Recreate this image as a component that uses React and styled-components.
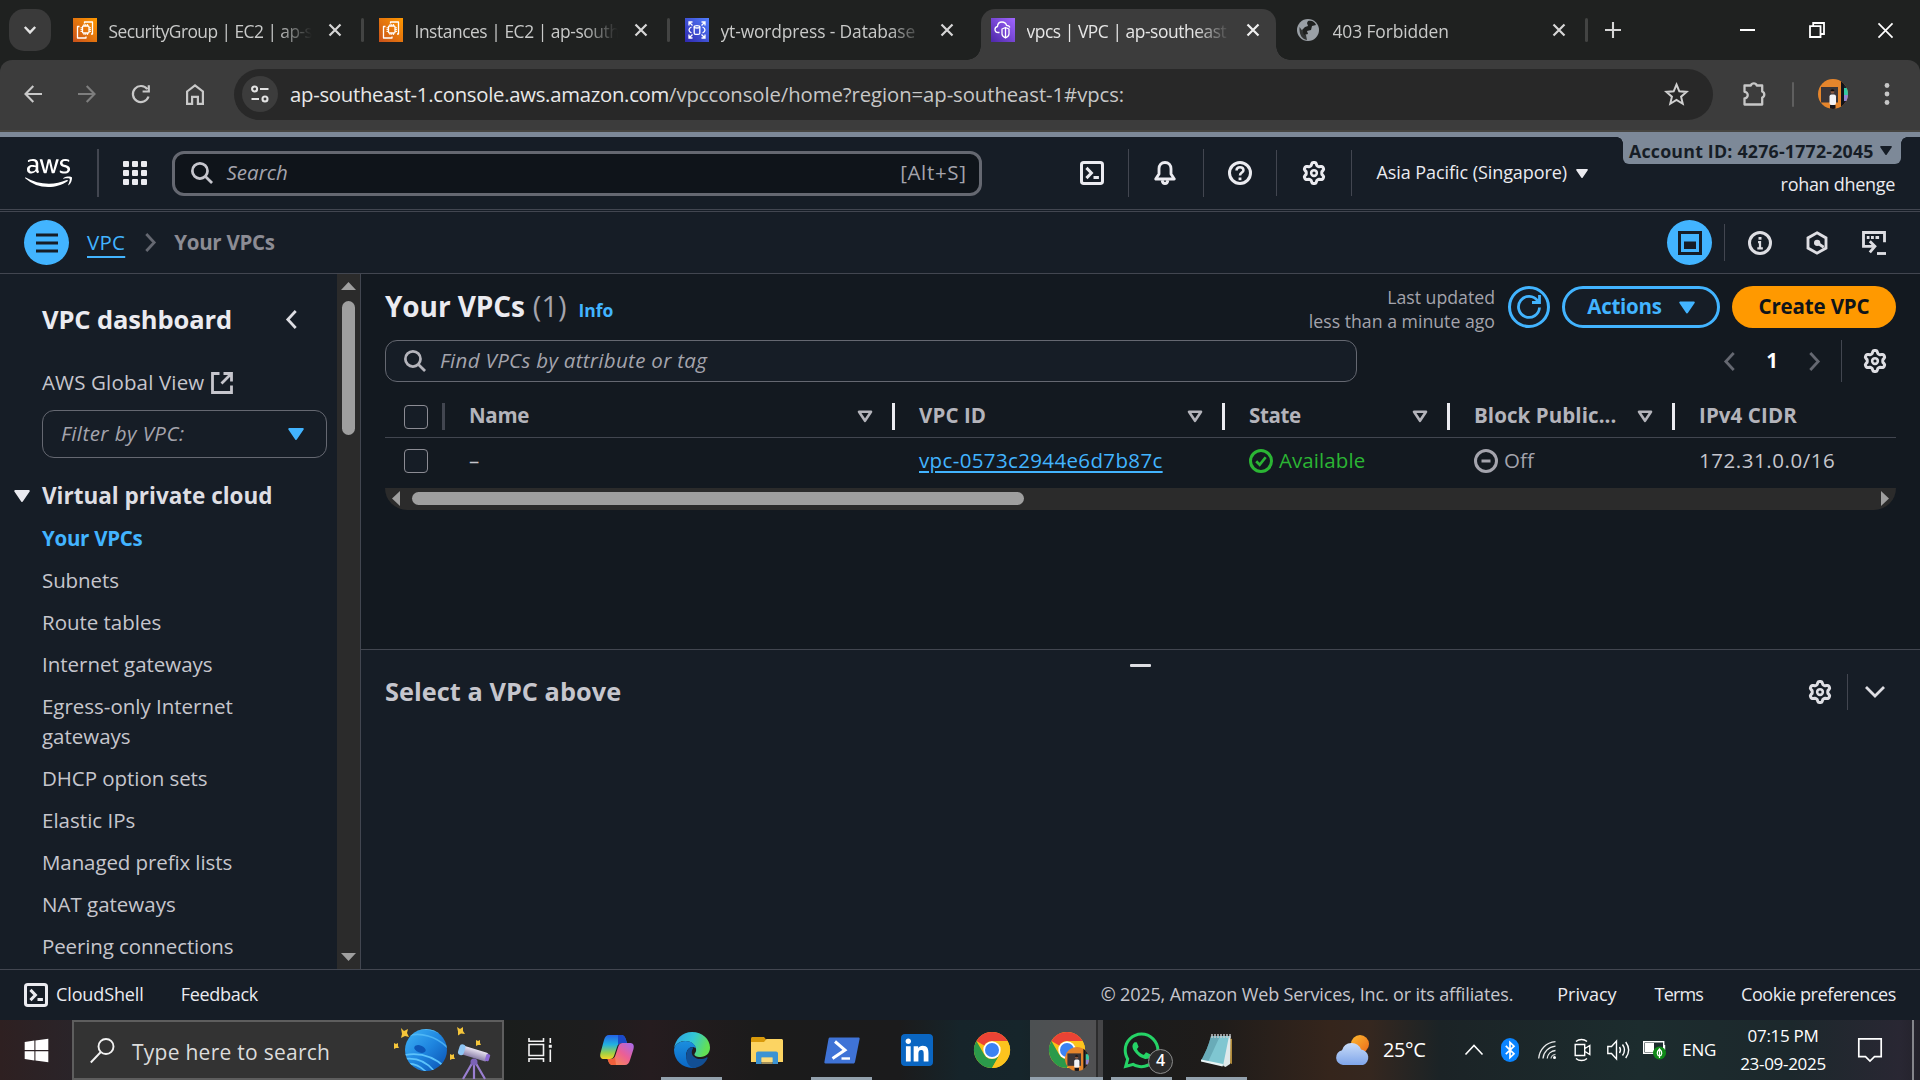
import React from "react";
import styled, { createGlobalStyle, css } from "styled-components";
import { FaAws, FaWindows, FaLinkedin, FaWhatsapp } from "react-icons/fa";

const Global = createGlobalStyle`
  *, *::before, *::after { box-sizing: border-box; }
  body { margin: 0; background: #161d26; overflow: hidden; }
  body, button, input { font-family: "Open Sans", "Noto Sans", sans-serif; }
`;

const Screen = styled.div`
  width: 1920px;
  height: 1080px;
  display: flex;
  flex-direction: column;
  overflow: hidden;
`;

const Label = styled.span`
  display: block;
  flex: none;
  white-space: pre;
  margin: ${(p) => (!p.$size || p.$size === 18 ? "-1px 0 1px" : "0")};
  font-size: ${(p) => p.$size || 20.5}px;
  font-weight: ${(p) => p.$weight || (p.$size ? 400 : 450)};
  font-style: ${(p) => (p.$italic ? "italic" : "normal")};
  letter-spacing: ${(p) => p.$track || 0}px;
  line-height: ${(p) => p.$line || 30}px;
  color: ${(p) => p.$color || "#c6c6cd"};
`;

const Cell = styled.div`
  display: flex;
  flex: none;
  align-items: center;
  justify-content: center;
  width: ${(p) => p.$w}px;
  height: ${(p) => (p.$h ? `${p.$h}px` : "100%")};
`;

const Gap = styled.div`
  flex: ${(p) => (p.$w ? "none" : "1")};
  width: ${(p) => p.$w || 0}px;
`;

const Rule = styled.div`
  flex: none;
  width: ${(p) => p.$w || 1}px;
  height: ${(p) => p.$h}px;
  background: ${(p) => p.$color || "#424650"};
  border-radius: ${(p) => p.$r || 0}px;
`;

const Glyph = styled.svg`
  display: block;
  flex: none;
  overflow: visible;
  width: ${(p) => p.$w || 24}px;
  height: ${(p) => p.$h || p.$w || 24}px;
  fill: ${(p) => p.$fill || "none"};
  stroke: ${(p) => p.$color || "#ebebf0"};
  stroke-width: ${(p) => p.$sw || 2};
`;

/* ---------- console icons ---------- */

const gearPath = (() => {
  const pts = [];
  for (let i = 0; i < 72; i++) {
    const a = (i / 72) * Math.PI * 2;
    const r = 6.1 + 0.95 * Math.tanh(2 * Math.cos(6 * a));
    pts.push(`${(8 + r * Math.sin(a)).toFixed(2)} ${(8 - r * Math.cos(a)).toFixed(2)}`);
  }
  return `M${pts.join("L")}Z`;
})();

const Gear = ({ color }) => (
  <Glyph viewBox="0 0 16 16" $color={color} $sw={2} strokeLinejoin="round">
    <path d={gearPath} />
    <circle cx="8" cy="8" r="1.9" strokeWidth="1.7" />
  </Glyph>
);
const Terminal = () => (
  <Glyph viewBox="0 0 16 16">
    <rect x="1" y="1" width="14" height="14" rx="1.5" />
    <path d="M4.3 4.6 7.6 8l-3.3 3.4" />
    <path d="M9 11h3.6" />
  </Glyph>
);
const Bell = () => (
  <Glyph viewBox="0 0 16 16" $sw={1.9} strokeLinejoin="round">
    <path d="M8 1C5.6 1 4 2.8 4 5.2V8.6L1.8 12H14.2L12 8.6V5.2C12 2.8 10.4 1 8 1Z" />
    <path d="M6.1 12.8C6.3 14.3 7 15 8 15s1.7-.7 1.9-2.2" />
  </Glyph>
);
const Help = () => (
  <Glyph viewBox="0 0 16 16">
    <circle cx="8" cy="8" r="7" />
    <path d="M5.7 6.3C5.7 4.9 6.7 4.1 8 4.1s2.3.8 2.3 2.05C10.3 7.7 8 7.7 8 9.6" strokeWidth="1.7" />
    <path d="M8 11v1.8" strokeWidth="1.9" />
  </Glyph>
);
const Info = () => (
  <Glyph viewBox="0 0 16 16" $color="#dedee3">
    <circle cx="8" cy="8" r="7" />
    <path d="M6.7 7.4H8v3.8M6.2 11.5h3.7" strokeWidth="1.5" />
    <path d="M8 4v1.8" />
  </Glyph>
);
const Hexagon = () => (
  <Glyph viewBox="0 0 16 16" $sw={1.9} $color="#dedee3">
    <path d="M8 1.2 14 4.6v6.8L8 14.8 2 11.4V4.6Z" />
    <path d="m8.5 8.2 4 2.6" />
    <circle cx="8.1" cy="7.9" r="2.1" fill="#dedee3" stroke="none" />
  </Glyph>
);
const Tutorial = () => (
  <Glyph viewBox="0 0 16 16" $sw={1.9} $color="#dedee3">
    <path d="M15 7.5V1H1v9.2h7" />
    <path d="M5.2 6.8 8.6 10.2 5.2 14.2" />
    <path d="M3.2 4.3H5M6 4.3h1.9M9 4.3h2.4" />
    <path d="M10 15h6" />
  </Glyph>
);
const SearchIcon = ({ w = 22, color = "#b4b4bb" }) => (
  <Glyph viewBox="0 0 16 16" $w={w} $color={color}>
    <circle cx="6.5" cy="6.5" r="5.5" />
    <path d="m10.5 10.5 4.8 4.8" />
  </Glyph>
);
const Down = ({ w = 16, h = 12, color = "#ebebf0" }) => (
  <Glyph viewBox="0 0 16 12" $w={w} $h={h} $color={color} $fill={color} strokeLinejoin="round">
    <path d="M1.2 1h13.6L8 11Z" />
  </Glyph>
);
const Filter = () => (
  <Glyph viewBox="0 0 16 13" $w={16} $h={13} $color="#b4b4bb" $sw={2.6} strokeLinejoin="round">
    <path d="M2 1.8h12L8 10.8Z" />
  </Glyph>
);
const Chevron = ({ w = 11, h = 19, color = "#dedee3", dir = "left", sw = 2.6 }) => (
  <Glyph viewBox="0 0 10 18" $w={w} $h={h} $color={color} $sw={sw}>
    <path d={dir === "left" ? "M9 1 1.5 9 9 17" : "M1 1 8.5 9 1 17"} />
  </Glyph>
);
const External = () => (
  <Glyph viewBox="0 0 22 22" $w={22} $color="#c6c6cd" $sw={2.8}>
    <path d="M8.5 1.5h-7v19h19v-7" />
    <path d="M12.5 1.5h8v8M20 2 10.5 11.5" />
  </Glyph>
);

/* ---------- browser ---------- */

const TabStrip = styled.div`
  height: 60px;
  flex: none;
  display: flex;
  align-items: stretch;
  background: #1f2120;
`;
const TabMenu = styled.div`
  width: 42px;
  height: 42px;
  margin: 9px 5.5px 0 9px;
  border-radius: 15px;
  background: #3a3a3a;
  display: flex;
  align-items: center;
  justify-content: center;
`;
const Tab = styled.div`
  position: relative;
  width: 306px;
  flex: none;
  display: flex;
  padding: 0 5px 0 6px;
  ${(p) =>
    p.$line &&
    css`
      &::after {
        content: "";
        position: absolute;
        right: -1px;
        top: 18px;
        width: 3px;
        height: 24px;
        border-radius: 2px;
        background: #434443;
      }
    `}
`;
const TabBody = styled.div`
  flex: 1;
  display: flex;
  align-items: center;
  justify-content: space-between;
  margin-top: 9px;
  padding: 0 17px 9px 10px;
  ${(p) =>
    p.$active &&
    css`
      position: relative;
      background: #3c3c3c;
      border-radius: 14px 14px 0 0;
      &::before,
      &::after {
        content: "";
        position: absolute;
        bottom: 0;
        width: 14px;
        height: 14px;
      }
      &::before {
        left: -14px;
        background: radial-gradient(circle at 0 0, transparent 13.5px, #3c3c3c 14px);
      }
      &::after {
        right: -14px;
        background: radial-gradient(circle at 100% 0, transparent 13.5px, #3c3c3c 14px);
      }
    `}
`;
const TabLead = styled.div`
  display: flex;
  align-items: center;
  gap: 12px;
`;
const TabTitle = styled.div`
  width: 205px;
  white-space: pre;
  font-size: 17.4px;
  letter-spacing: ${(p) => p.$track}px;
  line-height: 26px;
  padding-top: 2px;
  color: ${(p) => (p.$active ? "#e6e6e6" : "#c9cac9")};
  mask-image: linear-gradient(90deg, #000 168px, transparent 203px);
`;
const Toolbar = styled.div`
  height: 72px;
  flex: none;
  background: #1f2120;
`;
const ToolbarInner = styled.div`
  height: 72px;
  display: flex;
  align-items: center;
  padding: 0 0 2px 6px;
  background: #3c3c3c;
  border-radius: 12px 12px 0 0;
  border-bottom: 2px solid #464541;
`;
const Omnibox = styled.div`
  width: 1479px;
  height: 51px;
  display: flex;
  align-items: center;
  margin-left: 12px;
  border-radius: 26px;
  background: #282828;
  padding: 0 24px 0 8px;
`;
const SiteChip = styled.div`
  width: 36px;
  height: 36px;
  border-radius: 50%;
  background: #3c3c3c;
  display: flex;
  align-items: center;
  justify-content: center;
  margin-right: 12px;
`;
const Avatar = styled.div`
  width: ${(p) => p.$d}px;
  height: ${(p) => p.$d}px;
  border-radius: 50%;
  overflow: hidden;
`;

const CloseX = ({ c = "#d6d6d6" }) => (
  <Glyph viewBox="0 0 12 12" $w={12} $color={c} $sw={2.2}>
    <path d="m.5.5 11 11M11.5.5.5 11.5" />
  </Glyph>
);

const Ec2Fav = () => (
  <Glyph viewBox="0 0 24 24" $color="#fff" $sw={1.3} strokeLinejoin="round">
    <defs>
      <linearGradient id="ec2" x1="0" y1="1" x2="1" y2="0">
        <stop offset="0" stopColor="#c8511b" />
        <stop offset="1" stopColor="#f90" />
      </linearGradient>
    </defs>
    <rect width="24" height="24" fill="url(#ec2)" stroke="none" />
    <rect x="9.5" y="8" width="6.5" height="7" rx="1" />
    <path d="M11 6v2M12.8 6v2M14.6 6v2M11 15v2M12.8 15v2M14.6 15v2M7.5 9.8h2M7.5 11.6h2M7.5 13.4h2M16 9.8h2M16 11.6h2M16 13.4h2" strokeWidth="1" />
    <path d="M6.5 8.5h-2v11.5h8.5v-1.5M11.5 5.5V4h8v12h-1.5" />
  </Glyph>
);
const RdsFav = () => (
  <Glyph viewBox="0 0 24 24" $color="#fff" $sw={1.3}>
    <defs>
      <linearGradient id="rds" x1="0" y1="1" x2="1" y2="0">
        <stop offset="0" stopColor="#2e27ad" />
        <stop offset="1" stopColor="#527fff" />
      </linearGradient>
    </defs>
    <rect width="24" height="24" fill="url(#rds)" stroke="none" />
    <path d="M4 7.5V4h3.5M4 4l3.5 3.5M16.5 4H20v3.5M20 4l-3.5 3.5M4 16.5V20h3.5M4 20l3.5-3.5M20 16.5V20h-3.5M20 20l-3.5-3.5" />
    <ellipse cx="12" cy="8.8" rx="2.8" ry="1.2" />
    <path d="M9.2 8.8v6.4c0 1.6 5.6 1.6 5.6 0V8.8M6.5 9C4.6 9.8 4 10.8 4 12s.6 2.2 2.5 3M17.5 9c1.9.8 2.5 1.8 2.5 3s-.6 2.2-2.5 3" />
  </Glyph>
);
const VpcFav = () => (
  <Glyph viewBox="0 0 24 24" $color="#fff" $sw={1.3} strokeLinejoin="round">
    <defs>
      <linearGradient id="vpc" x1="0" y1="1" x2="1" y2="0">
        <stop offset="0" stopColor="#4d27a8" />
        <stop offset="1" stopColor="#a166ff" />
      </linearGradient>
    </defs>
    <rect width="24" height="24" fill="url(#vpc)" stroke="none" />
    <path d="M8.5 14.5H7.2C5.3 14.5 4 13.2 4 11.5c0-1.6 1-2.7 2.5-3C6.6 5.5 8.6 4 11 4c2.3 0 3.9 1.3 4.5 3.3 1.9.1 3 .9 3.3 2.2" />
    <path d="m14.5 9.5 3.5 1.5v5c0 2-1.5 3-3.5 4-2-1-3.5-2-3.5-4v-5ZM14.5 9.5V20" />
  </Glyph>
);
const GlobeFav = () => (
  <Glyph viewBox="0 0 24 24" $color="none">
    <circle cx="11" cy="12" r="11" fill="#9aa0a6" />
    <path d="M11 3c4-1 7 1 8 4l-4 1-1 4-4 1 1 3-4 1-2-5 3-3 3-1-1-3Z" fill="#1f2120" />
    <path d="M2.5 9 7 15l2 2 1 5C5 21 2 17 2.5 9Z" fill="#1f2120" opacity=".85" />
  </Glyph>
);
const Portrait = ({ d }) => (
  <Avatar $d={d}>
    <Glyph viewBox="0 0 30 30" $w={d} $color="none">
      <rect width="30" height="30" fill="#e5852c" />
      <rect x="23" width="3" height="30" fill="#10131a" />
      <rect x="26" width="4" height="10" fill="#1a2530" />
      <rect x="26" y="9" width="4" height="7" fill="#35c9a5" />
      <rect x="26" y="16" width="4" height="6" fill="#8f86d6" />
      <rect x="26" y="22" width="4" height="8" fill="#1a1c2a" />
      <rect x="3" y="8" width="17" height="15.500" fill="#3a3538" />
      <rect x="11.500" y="15.500" width="6.500" height="10.500" rx="2" fill="#f3f3f6" />
      <circle cx="14.500" cy="12.700" r="1.900" fill="#8a5b45" />
      <path d="M12.500 12.300a2 2 0 0 1 4 0Z" fill="#120c0a" />
      <rect x="12" y="26" width="5.500" height="4" fill="#15151c" />
    </Glyph>
  </Avatar>
);

const TABS = [
  { icon: <Ec2Fav />, title: "SecurityGroup | EC2 | ap-s", line: true, track: -0.55 },
  { icon: <Ec2Fav />, title: "Instances | EC2 | ap-south", line: true, track: -0.45 },
  { icon: <RdsFav />, title: "yt-wordpress - Database", track: -0.12 },
  { icon: <VpcFav />, title: "vpcs | VPC | ap-southeast", active: true, track: -0.45 },
  { icon: <GlobeFav />, title: "403 Forbidden", line: true, track: -0.1 },
];

const Browser = () => (
  <>
    <TabStrip>
      <TabMenu>
        <Glyph viewBox="0 0 12 8" $w={12} $h={8} $sw={2.4} $color="#e3e3e3">
          <path d="m.8 1 5.2 5.4L11.2 1" />
        </Glyph>
      </TabMenu>
      {TABS.map((t, i) => (
        <Tab key={i} $line={t.line}>
          <TabBody $active={t.active}>
            <TabLead>
              {t.icon}
              <TabTitle $active={t.active} $track={t.track}>{t.title}</TabTitle>
            </TabLead>
            <CloseX c={t.active ? "#f0f0f0" : undefined} />
          </TabBody>
        </Tab>
      ))}
      <Cell $w={52}>
        <Glyph viewBox="0 0 16 16" $w={16} $sw={2.1} $color="#d6d6d6">
          <path d="M8 0v16M0 8h16" />
        </Glyph>
      </Cell>
      <Gap />
      <Cell $w={69}>
        <Rule $w={15} $h={2} $color="#fff" />
      </Cell>
      <Cell $w={69}>
        <Glyph viewBox="0 0 16 16" $w={16} $sw={1.8} $color="#fff">
          <path d="M1 4.2h10.500V15H1ZM4.2 4V1H15v11h-3.4" />
        </Glyph>
      </Cell>
      <Cell $w={69}>
        <Glyph viewBox="0 0 16 16" $w={15} $sw={1.8} $color="#fff">
          <path d="m.5.5 15 15M15.5.5l-15 15" />
        </Glyph>
      </Cell>
    </TabStrip>
    <Toolbar>
      <ToolbarInner>
        <Cell $w={54}>
          <Glyph viewBox="0 0 18 18" $w={18} $sw={2.1} $color="#c9c9c9">
            <path d="M18 9H1.5M9.3 1 1.5 9l7.8 8" />
          </Glyph>
        </Cell>
        <Cell $w={54}>
          <Glyph viewBox="0 0 18 18" $w={18} $sw={2.1} $color="#7e7e7e">
            <path d="M0 9h16.5M8.7 1l7.8 8-7.8 8" />
          </Glyph>
        </Cell>
        <Cell $w={54}>
          <Glyph viewBox="0 0 18 18" $w={18} $sw={2.2} $color="#c9c9c9">
            <path d="M16.5 11.5A8 8 0 1 1 15.3 4.2M16.8.3v6.2h-6.2" />
          </Glyph>
        </Cell>
        <Cell $w={54}>
          <Glyph viewBox="0 0 18 21" $w={18} $h={21} $sw={2.2} $color="#c9c9c9">
            <path d="M1.1 7.5 9 1.4l7.9 6.1v12.3h-5v-7H6.1v7h-5Z" />
          </Glyph>
        </Cell>
        <Omnibox>
          <SiteChip>
            <Glyph viewBox="0 0 18 18" $w={18} $sw={2.1} $color="#e3e3e3">
              <circle cx="3.6" cy="4" r="2.5" />
              <path d="M9 4h8.5M.5 14H8" />
              <circle cx="14" cy="14" r="2.5" />
            </Glyph>
          </SiteChip>
          <Label $size={20.3} $track={-0.26} $color="#e8e8e8">ap-southeast-1.console.aws.amazon.com</Label>
          <Label $size={20.3} $track={-0.06} $color="#c7c7c7">/vpcconsole/home?region=ap-southeast-1#vpcs:</Label>
          <Gap />
          <Glyph viewBox="0 0 24 24" $w={25} $sw={1.9} $color="#d0d0d0">
            <path d="m12 2.4 2.7 6.5 7 .6-5.3 4.6 1.6 6.8-6-3.6-6 3.6 1.6-6.8L2.3 9.5l7-.6Z" />
          </Glyph>
        </Omnibox>
        <Gap $w={29} />
        <Glyph viewBox="0 0 27 27" $w={27} $sw={2.3} $color="#c7c7c7" strokeLinejoin="round">
          <path d="M3.5 6h6.3a3.2 3.2 0 0 1 6 0h5.4v6a3.2 3.2 0 0 1 0 6v7H3.5v-6.2a3.2 3.2 0 0 0 0-6.5Z" transform="translate(-1 -1.5)" />
        </Glyph>
        <Gap $w={23} />
        <Rule $w={2} $h={25} $color="#5f5f5f" $r={1} />
        <Gap $w={24} />
        <Portrait d={30} />
        <Gap $w={36} />
        <Glyph viewBox="0 0 6 24" $w={6} $h={24} $color="none">
          <g fill="#c7c7c7">
            <circle cx="3" cy="3.500" r="2.400" />
            <circle cx="3" cy="12" r="2.400" />
            <circle cx="3" cy="20.500" r="2.400" />
          </g>
        </Glyph>
      </ToolbarInner>
    </Toolbar>
  </>
);

/* ---------- console chrome ---------- */

const AccountStrip = styled.div`
  flex: none;
  height: 5px;
  background: #7d8998;
`;
const ConsoleNav = styled.div`
  flex: none;
  height: 75px;
  display: flex;
  align-items: flex-start;
  background: #161d26;
  border-bottom: 1px solid #424650;
`;
const NavRow = styled.div`
  height: 73px;
  flex: 1;
  display: flex;
  align-items: center;
  border-bottom: 1px solid #424650;
`;
const NavSearch = styled.div`
  width: 810px;
  height: 45px;
  display: flex;
  align-items: center;
  padding: 0 12px 0 16px;
  border: 3px solid #656871;
  border-radius: 12px;
  background: #0f141a;
`;
const Account = styled.div`
  width: 278px;
  height: 72px;
  flex: none;
  margin-right: 19px;
  display: flex;
  flex-direction: column;
  align-items: stretch;
`;
const AccountId = styled.div`
  position: relative;
  height: 27px;
  display: flex;
  align-items: center;
  padding: 0 9px 0 6px;
  background: #7d8998;
  border-radius: 0 0 6px 6px;
  &::before,
  &::after {
    content: "";
    position: absolute;
    top: 0;
    width: 6px;
    height: 6px;
  }
  &::before {
    left: -6px;
    background: radial-gradient(circle at 0 100%, transparent 5.5px, #7d8998 6px);
  }
  &::after {
    right: -6px;
    background: radial-gradient(circle at 100% 100%, transparent 5.5px, #7d8998 6px);
  }
`;
const AccountName = styled.div`
  flex: 1;
  display: flex;
  justify-content: flex-end;
  align-items: center;
  padding: 0 6px 3px 0;
`;
const AppGrid = styled.div`
  display: grid;
  grid-template-columns: repeat(3, 6px);
  grid-auto-rows: 6px;
  gap: 3px;
`;
const GridDot = styled.i`
  border-radius: 1px;
  background: #ebebf0;
`;
const Crumbs = styled.div`
  flex: none;
  height: 62px;
  display: flex;
  align-items: center;
  padding-left: 24px;
  background: #161d26;
  border-bottom: 1px solid #424650;
`;
const RoundButton = styled.div`
  width: 45px;
  height: 45px;
  border-radius: 50%;
  background: #42b4ff;
  display: flex;
  align-items: center;
  justify-content: center;
`;
const Link = styled(Label)`
  text-decoration: underline;
  text-decoration-thickness: 2px;
  text-underline-offset: ${(p) => p.$off || 4}px;
`;

const NavBar = () => (
  <ConsoleNav>
    <NavRow>
      <Cell $w={97}>
        <FaAws color="#fff" style={{ width: 47, height: 38 }} />
      </Cell>
      <Rule $h={48} $w={1.5} />
      <Gap $w={24} />
      <AppGrid>
        {Array.from({ length: 9 }, (_, i) => (
          <GridDot key={i} />
        ))}
      </AppGrid>
      <Gap $w={25} />
      <NavSearch>
        <SearchIcon color="#c6c6cd" />
        <Gap $w={14} />
        <Label $italic $color="#a4a4ad">Search</Label>
        <Gap />
        <Label $color="#a4a4ad" $track={0.65}>[Alt+S]</Label>
      </NavSearch>
      <Gap $w={74} />
      <Cell $w={72}><Terminal /></Cell>
      <Rule $h={48} />
      <Cell $w={72}><Bell /></Cell>
      <Gap $w={2} />
      <Rule $h={48} />
      <Cell $w={72}><Help /></Cell>
      <Rule $h={46} />
      <Cell $w={74}><Gear /></Cell>
      <Rule $h={46} />
      <Gap $w={25} />
      <Label $size={18} $weight={500} $track={-0.07} $color="#ebebf0">Asia Pacific (Singapore)</Label>
      <Gap $w={9} />
      <Down w={12} h={11} />
      <Gap />
      <Account>
        <AccountId>
          <Label $size={17.8} $weight={700} $line={24} $track={0.2} $color="#161d26">Account ID: 4276-1772-2045</Label>
          <Gap />
          <Down w={12} h={11} color="#161d26" />
        </AccountId>
        <AccountName>
          <Label $size={18} $weight={500} $track={-0.3} $color="#ebebf0">rohan dhenge</Label>
        </AccountName>
      </Account>
    </NavRow>
  </ConsoleNav>
);

const BreadcrumbBar = () => (
  <Crumbs>
    <RoundButton>
      <Glyph viewBox="0 0 22 20" $w={22} $h={20} $color="#161d26" $sw={3}>
        <path d="M0 2h22M0 10h22M0 18h22" />
      </Glyph>
    </RoundButton>
    <Gap $w={18} />
    <Link $color="#42b4ff" $off={6} $track={0.25}>VPC</Link>
    <Gap $w={20} />
    <Chevron dir="right" color="#656871" />
    <Gap $w={18} />
    <Label $weight={700} $track={-0.28} $color="#8c8c94">Your VPCs</Label>
    <Gap />
    <RoundButton>
      <Glyph viewBox="0 0 24 24" $color="#161d26" $sw={3}>
        <path d="M1.5 1.5h21v21h-21Z" />
        <rect x="6" y="10.5" width="12" height="7.5" fill="#161d26" stroke="none" />
      </Glyph>
    </RoundButton>
    <Gap $w={12} />
    <Rule $h={37} />
    <Gap $w={23} />
    <Info />
    <Gap $w={33} />
    <Hexagon />
    <Gap $w={33} />
    <Tutorial />
    <Gap $w={34} />
  </Crumbs>
);

/* ---------- sidebar ---------- */

const Body = styled.div`
  height: 695px;
  flex: none;
  display: flex;
`;
const Sidebar = styled.div`
  width: 337px;
  flex: none;
  overflow: hidden;
  background: #161d26;
`;
const SideHead = styled.div`
  height: 90px;
  display: flex;
  align-items: center;
  justify-content: space-between;
  padding: 0 40px 0 42px;
`;
const SideView = styled.div`
  height: 37px;
  display: flex;
  align-items: center;
  gap: 7px;
  padding-left: 42px;
`;
const SideSelect = styled.div`
  width: 285px;
  height: 48px;
  margin: 9px 0 0 42px;
  display: flex;
  align-items: center;
  justify-content: space-between;
  padding: 0 22px 0 18px;
  border: 1.5px solid #656871;
  border-radius: 12px;
`;
const SideSection = styled.div`
  height: 30px;
  margin-top: 23px;
  display: flex;
  align-items: center;
  gap: 12px;
  padding-left: 14px;
`;
const SideList = styled.div`
  display: flex;
  flex-direction: column;
  gap: 12px;
  padding: 13px 0 0 42px;
`;
const VScroll = styled.div`
  width: 24px;
  flex: none;
  display: flex;
  flex-direction: column;
  align-items: center;
  background: #2b2b2b;
  border-right: 1.5px solid #424650;
  padding: 8px 0 8px;
`;
const ScrollGap = styled.div`
  height: 11px;
  flex: none;
`;
const Thumb = styled.div`
  flex: none;
  width: ${(p) => p.$w}px;
  height: ${(p) => p.$h}px;
  border-radius: 7px;
  background: #9f9f9f;
`;
const Arrow = styled.div`
  flex: none;
  width: ${(p) => (p.$dir === "up" || p.$dir === "down" ? 15 : 8)}px;
  height: ${(p) => (p.$dir === "up" || p.$dir === "down" ? 8 : 15)}px;
  background: #9f9f9f;
  clip-path: ${(p) =>
    ({
      up: "polygon(50% 0, 100% 100%, 0 100%)",
      down: "polygon(0 0, 100% 0, 50% 100%)",
      left: "polygon(0 50%, 100% 0, 100% 100%)",
      right: "polygon(0 0, 100% 50%, 0 100%)",
    })[p.$dir]};
`;

const NAV = [
  ["Your VPCs", -0.28, true],
  ["Subnets", -0.1],
  ["Route tables", -0.02],
  ["Internet gateways", -0.02],
  ["Egress-only Internet\ngateways", -0.02],
  ["DHCP option sets", -0.06],
  ["Elastic IPs", 0.02],
  ["Managed prefix lists", -0.1],
  ["NAT gateways", 0],
  ["Peering connections", -0.12],
];

const SidePanel = () => (
  <>
    <Sidebar>
      <SideHead>
        <Label $size={25.5} $weight={700} $track={-0.12} $color="#ebebf0">VPC dashboard</Label>
        <Chevron />
      </SideHead>
      <SideView>
        <Label $track={0.15}>AWS Global View</Label>
        <External />
      </SideView>
      <SideSelect>
        <Label $italic $track={0.45} $color="#a4a4ad">Filter by VPC:</Label>
        <Down color="#42b4ff" />
      </SideSelect>
      <SideSection>
        <Down />
        <Label $size={22.5} $weight={700} $color="#dedee3">Virtual private cloud</Label>
      </SideSection>
      <SideList>
        {NAV.map(([text, track, on]) => (
          <Label key={text} $track={track} $weight={on ? 700 : 0} $color={on ? "#42b4ff" : "#c6c6cd"}>
            {text}
          </Label>
        ))}
      </SideList>
    </Sidebar>
    <VScroll>
      <Arrow $dir="up" />
      <ScrollGap />
      <Thumb $w={13} $h={134} />
      <Gap />
      <Arrow $dir="down" />
    </VScroll>
  </>
);

/* ---------- main ---------- */

const Main = styled.div`
  flex: 1;
  display: flex;
  flex-direction: column;
  background: #131920;
`;
const ListPane = styled.div`
  height: 375px;
  flex: none;
  padding: 12px 24px 0;
`;
const HeadRow = styled.div`
  height: 42px;
  display: flex;
  align-items: center;
`;
const Title = styled.div`
  display: flex;
  align-items: baseline;
  padding-top: 2px;
`;
const Updated = styled.div`
  display: flex;
  flex-direction: column;
  align-items: flex-end;
  margin: 4px 13px 0 0;
`;
const Pill = styled.div`
  width: ${(p) => p.$w}px;
  height: 42px;
  border-radius: 21px;
  display: flex;
  align-items: center;
  justify-content: center;
  margin-left: ${(p) => p.$ml || 0}px;
  gap: 17px;
  background: ${(p) => (p.$primary ? "#f90" : "#161d26")};
  border: ${(p) => (p.$primary ? "0" : "3px solid #42b4ff")};
`;
const FilterRow = styled.div`
  display: flex;
  align-items: center;
  height: 42px;
  margin-top: 12px;
`;
const FilterBox = styled.div`
  width: 972px;
  height: 42px;
  display: flex;
  align-items: center;
  gap: 14px;
  padding-left: 18px;
  border: 1.5px solid #656871;
  border-radius: 12px;
  background: #161d26;
`;
const Row = styled.div`
  display: flex;
  height: ${(p) => p.$h}px;
  align-items: ${(p) => p.$align || "center"};
  padding-bottom: ${(p) => p.$pb || 0}px;
  border-bottom: ${(p) => (p.$line ? "1px solid #424650" : "0")};
`;
const Col = styled.div`
  width: ${(p) => p.$w}px;
  flex: none;
  display: flex;
  align-items: center;
  padding-left: ${(p) => (p.$pad === undefined ? 24 : p.$pad)}px;
`;
const Check = styled.div`
  width: 24px;
  height: 24px;
  border: 1.5px solid #8c8c94;
  border-radius: 4px;
  background: #161d26;
`;
const HScroll = styled.div`
  height: 22px;
  display: flex;
  align-items: center;
  background: #2b2b2b;
  border-radius: 0 0 22px 22px;
  padding: 0 7px 1px;
`;
const Split = styled.div`
  flex: 1;
  background: #161d26;
  border-top: 1px solid #424650;
`;
const Handle = styled.div`
  width: 21px;
  height: 3px;
  border-radius: 1px;
  margin: 14px auto 0;
  background: #dedee3;
`;
const SplitHead = styled.div`
  display: flex;
  align-items: center;
  height: 38px;
  margin-top: 6px;
  padding: 0 35px 0 24px;
`;
const SplitTitle = styled.div`
  padding-bottom: 3px;
`;

const COLS = [
  ["Name", 450, -0.3],
  ["VPC ID", 330, 0.1],
  ["State", 225, -0.35],
  ["Block Public...", 225, 0.08],
];

const MainPanel = () => (
  <Main>
    <ListPane>
      <HeadRow>
        <Title>
          <Label $size={28} $weight={700} $track={-0.1} $color="#ebebf0">Your VPCs</Label>
          <Gap $w={8} />
          <Label $size={29} $color="#a4a4ad">(1)</Label>
          <Gap $w={12} />
          <Label $size={17.5} $weight={700} $color="#42b4ff">Info</Label>
        </Title>
        <Gap />
        <Updated>
          <Label $size={17.7} $line={24} $color="#a4a4ad">Last updated</Label>
          <Label $size={17.7} $line={24} $color="#a4a4ad">less than a minute ago</Label>
        </Updated>
        <Pill $w={42}>
          <Glyph viewBox="0 0 24 24" $color="#42b4ff" $sw={2.8}>
            <path d="M22.5 12.5A10.5 10.5 0 1 1 20.7 6M22.5 0v7.5H15" />
          </Glyph>
        </Pill>
        <Pill $w={158} $ml={12}>
          <Label $weight={700} $track={-0.25} $color="#42b4ff">Actions</Label>
          <Down color="#42b4ff" h={13} />
        </Pill>
        <Pill $w={164} $ml={12} $primary>
          <Label $weight={700} $track={-0.15} $color="#0f141a">Create VPC</Label>
        </Pill>
      </HeadRow>
      <FilterRow>
        <FilterBox>
          <SearchIcon />
          <Label $italic $track={0.32} $color="#a4a4ad">Find VPCs by attribute or tag</Label>
        </FilterBox>
        <Gap />
        <Chevron color="#656871" />
        <Cell $w={74}>
          <Label $weight={700} $color="#fff">1</Label>
        </Cell>
        <Chevron color="#656871" dir="right" />
        <Gap $w={21} />
        <Rule $h={42} />
        <Gap $w={21} />
        <Gear color="#dedee3" />
        <Gap $w={9} />
      </FilterRow>
      <Row $h={56} $line $pb={7} $align="flex-end">
        <Col $w={60} $pad={19}>
          <Check />
          <Gap />
          <Rule $h={27} $w={3} />
        </Col>
        {COLS.map(([name, w, track]) => (
          <Col key={name} $w={w}>
            <Label $weight={700} $line={27} $track={track} $color="#b4b4bb">{name}</Label>
            <Gap />
            <Filter />
            <Gap $w={19} />
            <Rule $h={27} $w={3} $color="#ebebf0" />
          </Col>
        ))}
        <Col $w={221}>
          <Label $weight={700} $line={27} $track={0.1} $color="#b4b4bb">IPv4 CIDR</Label>
        </Col>
      </Row>
      <Row $h={50} $pb={4}>
        <Col $w={60} $pad={19}><Check /></Col>
        <Col $w={450}><Label>–</Label></Col>
        <Col $w={330}><Link $color="#42b4ff" $off={3} $track={0.36}>vpc-0573c2944e6d7b87c</Link></Col>
        <Col $w={225}>
          <Glyph viewBox="0 0 16 16" $color="#2bb534">
            <circle cx="8" cy="8" r="7" />
            <path d="m4.8 8.2 2.3 2.3 4-5" strokeWidth="1.8" />
          </Glyph>
          <Gap $w={6} />
          <Label $color="#2bb534" $track={0.08}>Available</Label>
        </Col>
        <Col $w={225}>
          <Glyph viewBox="0 0 16 16" $color="#a4a4ad">
            <circle cx="8" cy="8" r="7" />
            <path d="M5 8h6" />
          </Glyph>
          <Gap $w={6} />
          <Label $color="#a4a4ad" $track={0.1}>Off</Label>
        </Col>
        <Col $w={221}><Label $track={0.55}>172.31.0.0/16</Label></Col>
      </Row>
      <HScroll>
        <Arrow $dir="left" />
        <Gap $w={12} />
        <Thumb $w={612} $h={13} />
        <Gap />
        <Arrow $dir="right" />
      </HScroll>
    </ListPane>
    <Split>
      <Handle />
      <SplitHead>
        <SplitTitle>
          <Label $size={25.3} $weight={700} $track={0.05}>Select a VPC above</Label>
        </SplitTitle>
        <Gap />
        <Gear color="#dedee3" />
        <Gap $w={15} />
        <Rule $h={36} />
        <Gap $w={17} />
        <Glyph viewBox="0 0 20 12" $w={20} $h={12} $sw={2.8} $color="#dedee3">
          <path d="m1 1 9 9 9-9" />
        </Glyph>
      </SplitHead>
    </Split>
  </Main>
);

/* ---------- footer ---------- */

const Footer = styled.div`
  height: 51px;
  flex: none;
  display: flex;
  align-items: center;
  padding: 0 24px;
  background: #161d26;
  border-top: 1px solid #424650;
`;

const ConsoleFooter = () => (
  <Footer>
    <Terminal />
    <Gap $w={8} />
    <Label $size={18} $weight={500} $track={-0.12} $color="#ebebf0">CloudShell</Label>
    <Gap $w={37} />
    <Label $size={18} $weight={500} $track={-0.3} $color="#ebebf0">Feedback</Label>
    <Gap />
    <Label $size={18} $track={-0.14}>© 2025, Amazon Web Services, Inc. or its affiliates.</Label>
    <Gap $w={44} />
    <Label $size={18} $weight={500} $color="#ebebf0">Privacy</Label>
    <Gap $w={38} />
    <Label $size={18} $weight={500} $track={-0.85} $color="#ebebf0">Terms</Label>
    <Gap $w={38} />
    <Label $size={18} $weight={500} $track={-0.4} $color="#ebebf0">Cookie preferences</Label>
  </Footer>
);

/* ---------- taskbar ---------- */

const Taskbar = styled.div`
  height: 60px;
  flex: none;
  display: flex;
  align-items: center;
  background: linear-gradient(
    90deg,
    #2e2021 0,
    #2a2429 72px,
    #1a1d1c 504px,
    #1d1d1e 590px,
    #251c1f 650px,
    #1b1b1b 760px,
    #1b1b1c 900px,
    #16242a 960px,
    #16252b 1020px,
    #1a1b1c 1110px,
    #1f1c1a 1220px,
    #35251c 1330px,
    #35271f 1370px,
    #1b2326 1440px,
    #1c2c2e 1640px,
    #1c282c 1790px,
    #292733 1900px,
    #24222b 1920px
  );
`;
const TaskSearch = styled.div`
  width: 432px;
  height: 60px;
  flex: none;
  display: flex;
  align-items: center;
  padding: 0 10px 0 16px;
  background: #333;
  border: 2px solid #5e5e5e;
`;
const TaskSearchText = styled.div`
  padding-top: 3px;
`;
const App60 = styled.div`
  position: relative;
  width: 75px;
  height: 60px;
  flex: none;
  display: flex;
  align-items: center;
  justify-content: center;
  ${(p) =>
    p.$active &&
    css`
      &::before {
        content: "";
        position: absolute;
        left: 1px;
        top: 0;
        width: 73px;
        height: 60px;
        background: linear-gradient(90deg, #4c5052 0, #505052 66px, #2c2c2d 66px, #2c2c2d 68px, #454547 68px);
      }
    `}
  ${(p) =>
    p.$run &&
    css`
      &::after {
        content: "";
        position: absolute;
        left: ${p.$active ? 1 : 7}px;
        bottom: 0;
        width: ${p.$active ? 73 : 61}px;
        height: 3px;
        background: #93a1ad;
      }
    `}
`;
const Over = styled.div`
  position: absolute;
  left: 36px;
  top: 27px;
`;
const Badge = styled.div`
  position: absolute;
  left: 44px;
  top: 29px;
  width: 25px;
  height: 25px;
  border-radius: 50%;
  background: #2b2b2b;
  border: 1.5px solid #8b8b8b;
  color: #fff;
  font-size: 16px;
  font-weight: 600;
  line-height: 21px;
  text-align: center;
`;
const Front = styled.div`
  position: relative;
  display: flex;
`;
const Clock = styled.div`
  width: 110px;
  display: flex;
  flex-direction: column;
  align-items: center;
`;
const InPlate = styled.div`
  width: 32px;
  height: 32px;
  border-radius: 4px;
  overflow: hidden;
  background: linear-gradient(#fff, #fff) center / 24px 24px no-repeat;
`;

const SearchArt = () => (
  <Glyph viewBox="0 0 100 56" $w={100} $h={56} $color="none">
    <defs>
      <linearGradient id="planet" x1="0" y1="0" x2="1" y2="1">
        <stop offset="0" stopColor="#3fb4f7" />
        <stop offset=".5" stopColor="#1f86e0" />
        <stop offset="1" stopColor="#0a4fb0" />
      </linearGradient>
      <clipPath id="pc"><circle cx="34" cy="28" r="21" /></clipPath>
      <linearGradient id="tube" x1="0" y1="0" x2="0" y2="1">
        <stop offset="0" stopColor="#e9e4f2" />
        <stop offset="1" stopColor="#8a7fa8" />
      </linearGradient>
    </defs>
    <circle cx="34" cy="28" r="21" fill="url(#planet)" />
    <g clipPath="url(#pc)" fill="none" stroke="#5cc3fb" strokeWidth="1.7">
      <path d="M16 14c12-4 28 0 40 12M20 9c12-4 24-2 34 6" opacity=".7" />
      <path d="M12 37c14-2 24 4 31 13M12 42c10-2 18 3 24 10M13 33c16-3 30 3 40 12" />
    </g>
    <ellipse cx="28" cy="27" rx="6" ry="3.5" fill="#0d57b8" transform="rotate(20 28 27)" />
    <g fill="#f5c53a">
      <path d="m9 6 3 3 4-2-1 4 2 4-4-1-4 2 1-4Z" />
      <path d="m2 21 2 1 2-1v3l1 2h-3l-2 1v-3Z" />
      <path d="m65 5 3 2 3-2v4l2 3-4-.5-3 2v-4Z" />
      <path d="m84 18 2 1 2-1v3l1 2h-3l-2 1v-3Z" />
      <path d="m58 32 2 1 2-1v3l1 2h-3l-2 1v-3Z" />
    </g>
    <g stroke="#9a7fd1" strokeWidth="2.2" fill="none">
      <path d="M82 38 71 57M82 38l11 19M82 38v19" />
    </g>
    <g transform="rotate(17 82 32)">
      <rect x="69" y="27" width="27" height="9" rx="2" fill="url(#tube)" />
      <rect x="66" y="26" width="6" height="11" rx="3" fill="#8fc6f5" />
      <rect x="94" y="28" width="4" height="7" rx="1" fill="#8e6bd6" />
    </g>
    <circle cx="82" cy="40" r="3.5" fill="#7c63b8" />
  </Glyph>
);

const Chrome = () => (
  <Glyph viewBox="0 0 36 36" $w={36} $color="none">
    <circle cx="18" cy="18" r="18" fill="#fbc116" />
    <path d="M2.41 9A18 18 0 0 1 33.59 9H18a9 9 0 0 0-7.8 4.5Z" fill="#ea4335" />
    <path d="M2.41 9A18 18 0 0 0 18 36l7.8-13.5A9 9 0 0 1 10.2 22.5Z" fill="#2b9a4a" />
    <path d="M33.59 9H18a9 9 0 0 1 7.8 13.5L18 36A18 18 0 0 0 33.59 9Z" fill="#fcc31e" />
    <circle cx="18" cy="18" r="8.7" fill="#fff" />
    <circle cx="18" cy="18" r="7" fill="#3b82f3" />
  </Glyph>
);
const Edge = () => (
  <Glyph viewBox="0 0 36 36" $w={36} $color="none">
    <defs>
      <linearGradient id="e1" x1="0" y1="0" x2="1" y2=".3">
        <stop offset="0" stopColor="#2c9fe6" />
        <stop offset=".55" stopColor="#33c6d6" />
        <stop offset="1" stopColor="#62e055" />
      </linearGradient>
      <linearGradient id="e2" x1="0" y1="0" x2="0" y2="1">
        <stop offset="0" stopColor="#1b8fdf" />
        <stop offset="1" stopColor="#0a66c4" />
      </linearGradient>
    </defs>
    <path d="M0 17C1 7 8.5 0 18 0c10.5 0 18 7.5 18 15.5 0 6-4.5 9.5-9.5 9.5-4.5 0-6.5-1.5-6-3 1-1.5 2-3 1.5-5.5C21 12 16.5 9 11.5 9 6 9 1 12.5 0 17Z" fill="url(#e1)" />
    <path d="M0 17.5C1 12.5 6 9 11.5 9c5.5 0 10 3.5 10.5 7.5-2.5-2.5-7-2-9 2.5-3 7 1.5 14 9.5 16.5C11 38 0 30 0 17.5Z" fill="url(#e2)" />
    <path d="M13 19.5c1-3.5 4-5 6.5-4-2 3-2.5 6 0 9 3 3 8.5 3.5 13 1 .8-.4 1.3.2.9 1C30.5 32.5 25 36 19 36c-7-3-8-11-6-16.5Z" fill="#124f94" />
  </Glyph>
);
const Copilot = () => (
  <Glyph viewBox="0 0 34 32" $w={34} $h={32} $color="none">
    <defs>
      <linearGradient id="c1" x1="0" y1="0" x2="0" y2="1">
        <stop offset="0" stopColor="#2463e8" />
        <stop offset=".4" stopColor="#22b1e0" />
        <stop offset=".75" stopColor="#9bd048" />
        <stop offset="1" stopColor="#f5d327" />
      </linearGradient>
      <linearGradient id="c2" x1="1" y1="0" x2="0" y2="1">
        <stop offset="0" stopColor="#a26bf0" />
        <stop offset=".45" stopColor="#ec5f95" />
        <stop offset="1" stopColor="#fb9a3c" />
      </linearGradient>
    </defs>
    <path d="M9 1h12c3 0 4 1.5 5 5l1 3h-5c-3 0-4 1-5 4l-3 9c-.8 2-2 3-4 3H4c-3 0-4.5-2-3.5-6L4 6c1-3.5 2.5-5 5-5Z" fill="url(#c1)" />
    <path d="M18 1h3c3 0 4 1.5 5 5l1 3h-5c-2 0-3 .5-4 2Z" fill="#1b49c9" />
    <path d="M25 31H13c-3 0-4-1.5-5-5l-.5-1H11c2.5 0 3.5-1 4.5-4l3-9c.8-2 2-3 4-3H30c3 0 4.5 2 3.5 6L30 26c-1 3.5-2.5 5-5 5Z" fill="url(#c2)" />
    <path d="M16 31h-3c-3 0-4-1.5-5-5l-.5-1H11c2 0 3-.5 4-2Z" fill="#f0603c" />
  </Glyph>
);
const Explorer = () => (
  <Glyph viewBox="0 0 32 27" $w={32} $h={27} $color="none">
    <path d="M0 1.5C0 .7.7 0 1.5 0H13l3 3.5v3H0Z" fill="#d99a0b" />
    <path d="M0 5h13l2.5-3H30.5c.8 0 1.5.7 1.5 1.5V25H0Z" fill="#fcd462" />
    <path d="M5 27V16.5c0-1.1.9-2 2-2h18c1.1 0 2 .9 2 2V27h-5.5v-6.5h-11V27Z" fill="#3c93d2" />
    <path d="M10.5 27v-6.5h11V27Z" fill="#fbe08b" opacity=".6" />
  </Glyph>
);
const PowerShell = () => (
  <Glyph viewBox="0 0 36 27" $w={36} $h={27} $color="#fff" $sw={3}>
    <path d="M6 .5h28.5c.9 0 1.3.6 1.1 1.4L31 25c-.2.9-.8 1.5-1.7 1.5H1.5c-.9 0-1.3-.6-1.1-1.4L4.5 2C4.7 1 5.2.5 6 .5Z" fill="#3f73d6" stroke="none" />
    <path d="m11 4.5 10 8.5L8.5 21.5" />
    <path d="M17.5 21.5h8.5" strokeWidth="2.4" />
  </Glyph>
);
const Notepad = () => (
  <Glyph viewBox="0 0 34 34" $w={34} $color="none">
    <path d="m29 5 3 1v25l-3-1Z" fill="#b08a3a" />
    <path d="M11 3h19.5L30 31l-4.5 3-2-1Z" fill="#dfe9eb" />
    <path d="M11 3h18l-6 30C16 31 8 29 1 28 5 20 9 12 11 3Z" fill="#7fc6d1" />
    <path d="M11 3h9L8 29 1 28C5 20 9 12 11 3Z" fill="#5a9aa6" opacity=".6" />
    <path d="M1 26.5 23 31l-.5 2.5L1 28.5Z" fill="#e8f3f4" />
    <path d="M12 1v4M15 1v4M18 1v4M21 1v4M24 1v4M27 1v4M30 1v4" stroke="#c9cdd0" strokeWidth="1.4" />
  </Glyph>
);
const Weather = () => (
  <Glyph viewBox="0 0 36 30" $w={36} $h={30} $color="none">
    <defs>
      <linearGradient id="sun" x1="0" y1="0" x2="1" y2="1">
        <stop offset="0" stopColor="#fdb92e" />
        <stop offset="1" stopColor="#ec6a1c" />
      </linearGradient>
      <linearGradient id="cl" x1="0" y1="0" x2="0" y2="1">
        <stop offset="0" stopColor="#c9dcf8" />
        <stop offset="1" stopColor="#7fa5ea" />
      </linearGradient>
    </defs>
    <circle cx="25" cy="9" r="9" fill="url(#sun)" />
    <path d="M8 30a7.5 7.5 0 0 1-1-14.8A10 10 0 0 1 26 14.5 8 8 0 0 1 28 30Z" fill="url(#cl)" />
  </Glyph>
);

const TaskbarRow = () => (
  <Taskbar>
    <Cell $w={72}>
      <FaWindows color="#fff" style={{ width: 27, height: 27 }} />
    </Cell>
    <TaskSearch>
      <Glyph viewBox="0 0 25 25" $w={25} $sw={1.9} $color="#f2f2f2">
        <circle cx="16" cy="8.5" r="7.5" />
        <path d="M10.8 14 .8 24.5" />
      </Glyph>
      <Gap $w={17} />
      <TaskSearchText>
        <Label $size={21} $track={0.26} $color="#dcdcdc">Type here to search</Label>
      </TaskSearchText>
      <Gap />
      <SearchArt />
    </TaskSearch>
    <Cell $w={72}>
      <Glyph viewBox="0 0 24 24" $w={24} $h={24} $sw={1.6} $color="#f2f2f2">
        <path d="M1 6.5h14.5v11H1ZM1 0v3.2h14.5V0M1 24v-3.2h14.5V24M22.3 0v5M22.3 11.5V24" />
        <path d="M20.8 8.3h3" strokeWidth="3" />
      </Glyph>
    </Cell>
    <Gap $w={3} />
    <App60><Copilot /></App60>
    <App60 $run><Edge /></App60>
    <App60><Explorer /></App60>
    <App60 $run><PowerShell /></App60>
    <App60>
      <InPlate><FaLinkedin color="#0a66c2" viewBox="0 32 448 448" style={{ width: 32, height: 32, display: "block" }} /></InPlate>
    </App60>
    <App60><Chrome /></App60>
    <App60 $run $active>
      <Front><Chrome /></Front>
      <Over><Portrait d={24} /></Over>
    </App60>
    <App60 $run>
      <FaWhatsapp color="#25d366" style={{ width: 41, height: 41 }} />
      <Badge>4</Badge>
    </App60>
    <App60 $run><Notepad /></App60>
    <Gap $w={81} />
    <Weather />
    <Gap $w={12} />
    <Label $size={20} $line={34} $track={-0.4} $color="#fff">25°C</Label>
    <Gap />
    <Glyph viewBox="0 0 18 10" $w={18} $h={10} $sw={1.6} $color="#fff"><path d="m.5 9.5 8.5-9 8.5 9" /></Glyph>
    <Gap $w={18} />
    <Glyph viewBox="0 0 18 24" $w={18} $h={24} $sw={1.7} $color="#fff">
      <rect width="18" height="24" rx="9" fill="#0a84ff" stroke="none" />
      <path d="m4.8 7.8 8.2 8L9 19.5v-15l4 3.7-8.2 8" />
    </Glyph>
    <Gap $w={19} />
    <Glyph viewBox="0 0 18 18" $w={18} $h={18} $sw={1.3} $color="#fff">
      <path d="M.7 17.5C1.5 8.5 8 1.5 17.5.7M5 17.5C5.5 11 10.5 5.8 17.5 5.2M9.2 17.5c.5-4.5 3.8-7.7 8.3-8" opacity=".9" />
      <path d="M13 17.5c.3-2.3 2-3.9 4.5-4.2" opacity=".7" />
      <circle cx="16.5" cy="16.5" r="1.5" fill="#fff" stroke="none" />
    </Glyph>
    <Gap $w={18} />
    <Glyph viewBox="0 0 18 22" $w={18} $h={22} $sw={1.4} $color="#fff">
      <path d="M1.2 5.5h9.5v11H1.2ZM11 9.5l4.8-3v9l-4.8-3M2 2.5C5-.2 10-.2 13 2.5M2 19.5c3 2.7 8 2.7 11 0" />
    </Glyph>
    <Gap $w={15} />
    <Glyph viewBox="0 0 23 20" $w={23} $h={20} $sw={1.4} $color="#fff">
      <path d="M.8 6.5h3.7l5-5.5v18l-5-5.5H.8Z" />
      <path d="M12.5 7c1.3 2 1.3 4 0 6M15.5 4.5c2.5 3.5 2.5 7.500 0 11M18.7 2c3.7 5 3.7 11 0 16" />
    </Glyph>
    <Gap $w={13} />
    <Glyph viewBox="0 0 23 18" $w={23} $h={18} $sw={1.4} $color="#fff">
      <path d="M.7.7h20v11.5H.7ZM21.5 4v5" />
      <path d="M2 2h9v9H2Z" fill="#fff" stroke="none" />
      <circle cx="16.5" cy="12" r="6.5" fill="#0f8a18" stroke="none" />
      <path d="M16.5 8c-3.5 3-2.5 6.5 0 7 2.5-.5 3.5-4 0-7v9" strokeWidth="1.2" />
    </Glyph>
    <Gap $w={16} />
    <Label $size={17} $line={32} $track={-0.3} $color="#fff">ENG</Label>
    <Gap $w={12} />
    <Clock>
      <Label $size={17} $line={28} $track={-0.3} $color="#fff">07:15 PM</Label>
      <Label $size={17} $line={28} $track={-0.3} $color="#fff">23-09-2025</Label>
    </Clock>
    <Gap $w={20} />
    <Glyph viewBox="0 0 24 24" $w={24} $h={24} $sw={1.7} $color="#fff">
      <path d="M.8.8h22.4v17.9h-6.7L12 23l-4.5-4.3H.8Z" />
    </Glyph>
    <Gap $w={30} />
    <Rule $w={2} $h={60} $color="#85858b" />
    <Gap $w={6} />
  </Taskbar>
);

export default function App() {
  return (
    <>
      <Global />
      <Screen>
        <Browser />
        <AccountStrip />
        <NavBar />
        <BreadcrumbBar />
        <Body>
          <SidePanel />
          <MainPanel />
        </Body>
        <ConsoleFooter />
        <TaskbarRow />
      </Screen>
    </>
  );
}
